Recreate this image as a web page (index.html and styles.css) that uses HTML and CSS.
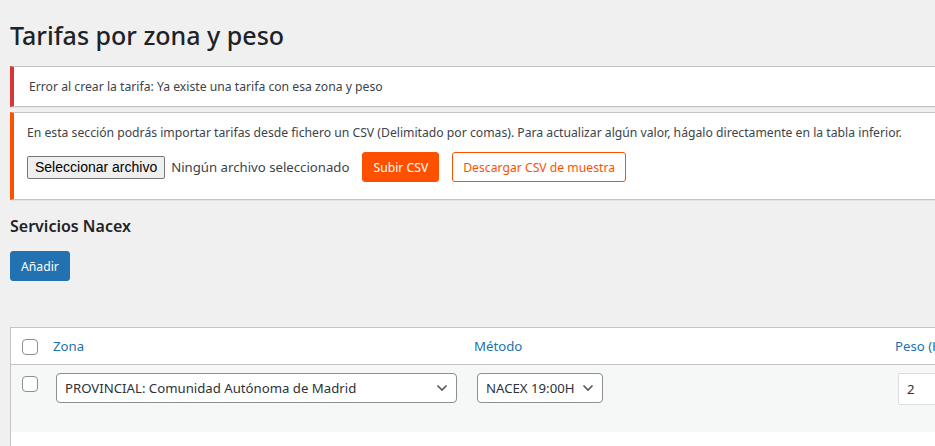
FILE: index.html
```html
<!DOCTYPE html>
<html lang="es">
<head>
<meta charset="UTF-8">
<title>Tarifas por zona y peso</title>
<link rel="stylesheet" href="styles.css">
</head>
<body>

<div class="wrap">
  <h1 class="page-title">Tarifas por zona y peso</h1>

  <!-- avisos -->
  <div class="notice notice-error">
    <p>Error al crear la tarifa: Ya existe una tarifa con esa zona y peso</p>
  </div>

  <div class="notice notice-csv">
    <p>En esta sección podrás importar tarifas desde fichero un CSV (Delimitado por comas). Para actualizar algún valor, hágalo directamente en la tabla inferior.</p>
    <div class="csv-row">
      <div class="file-input">
        <button class="file-btn" type="button">Seleccionar archivo</button>
        <span class="file-name">Ningún archivo seleccionado</span>
      </div>
      <button class="btn btn-orange" type="button">Subir CSV</button>
      <button class="btn btn-orange-outline" type="button">Descargar CSV de muestra</button>
    </div>
  </div>

  <h2 class="section-title">Servicios Nacex</h2>
  <button class="btn btn-primary" type="button">Añadir</button>

  <!-- tabla de tarifas -->
  <div class="rates-table">
    <div class="rates-head">
      <div class="cell check"><span class="checkbox"></span></div>
      <div class="cell col-zone"><a href="#">Zona</a></div>
      <div class="cell col-method"><a href="#">Método</a></div>
      <div class="cell col-weight"><a href="#">Peso (Kg)</a></div>
    </div>
    <div class="rates-row alt">
      <div class="cell check"><span class="checkbox"></span></div>
      <div class="cell col-zone">
        <div class="select select-zone">
          <span>PROVINCIAL: Comunidad Autónoma de Madrid</span>
          <svg width="12" height="8" viewBox="0 0 12 8"><path d="M1.5 1.5 6 6 10.5 1.5" fill="none" stroke="#50575e" stroke-width="1.6"/></svg>
        </div>
      </div>
      <div class="cell col-method">
        <div class="select select-method">
          <span>NACEX 19:00H</span>
          <svg width="12" height="8" viewBox="0 0 12 8"><path d="M1.5 1.5 6 6 10.5 1.5" fill="none" stroke="#50575e" stroke-width="1.6"/></svg>
        </div>
      </div>
      <div class="cell col-weight">
        <div class="text-input">2</div>
      </div>
    </div>
    <div class="rates-row">
      <div class="cell check"></div>
      <div class="cell col-zone"><span class="row-note">Guardar los cambios de la tarifa</span></div>
    </div>
  </div>
</div>

</body>
</html>
```

FILE: styles.css
```css
* {
  box-sizing: border-box;
}

html, body {
  margin: 0;
  background: #f0f0f1;
  overflow: hidden;
}

body {
  font-family: "Noto Sans", "Open Sans", sans-serif;
  font-size: 12.2px;
  color: #3c434a;
  width: 935px;
  height: 446px;
}

.wrap {
  padding-left: 10px;
  width: 1400px;
}

.page-title {
  font-size: 25px;
  font-weight: 500;
  color: #1d2327;
  line-height: 30px;
  margin: 0;
  padding: 20px 0 16px;
}

/* avisos */
.notice {
  background: #fff;
  border: 1px solid #c3c4c7;
  border-left-width: 4px;
  box-shadow: 0 1px 1px rgba(0, 0, 0, .04);
  padding: 1px 12px 1px 15px;
  margin: 0 0 5px;
}

.notice p {
  margin: 8px 0;
  line-height: 21px;
}

.notice-error {
  border-left-color: #d63638;
}

.notice-csv {
  border-left-color: #ff5000;
  padding-left: 13px;
  padding-bottom: 17px;
}

.notice-csv p {
  margin: 8px 0 9px;
}

.csv-row {
  display: flex;
  align-items: center;
  gap: 13px;
}

.file-input {
  display: flex;
  align-items: center;
  gap: 6px;
}

.file-btn {
  font-family: "Liberation Sans", Arial, sans-serif;
  font-size: 14px;
  color: #000;
  background: #efefef;
  border: 1px solid #767676;
  border-radius: 2px;
  height: 23px;
  padding: 0 7px;
}

.file-name {
  color: #3c434a;
  font-size: 13.2px;
}

.btn {
  font-family: inherit;
  font-size: 12.2px;
  height: 30px;
  padding: 0 10px;
  border-radius: 3px;
  cursor: pointer;
}

.btn-orange {
  background: #ff5000;
  border: 1px solid #ff5000;
  color: #fff;
}

.btn-orange-outline {
  background: #fff;
  border: 1px solid #ff5000;
  color: #ff5000;
}

.btn-primary {
  background: #2271b1;
  border: 1px solid #2271b1;
  color: #fff;
  display: block;
}

.section-title {
  font-size: 16px;
  font-weight: 600;
  color: #1d2327;
  margin: 0;
  padding: 10px 0 14px;
}

/* tabla */
.rates-table {
  margin-top: 46px;
  background: #fff;
  border: 1px solid #c3c4c7;
}

.rates-head,
.rates-row {
  display: flex;
}

.rates-head {
  height: 37px;
  border-bottom: 1px solid #c3c4c7;
  align-items: center;
}

.rates-head a {
  color: #2271b1;
  text-decoration: none;
  font-size: 13.2px;
}

.rates-row {
  height: 67px;
}

.rates-row.alt {
  background: #f6f7f7;
}

.cell {
  flex: none;
}

.check {
  width: 42px;
  padding-left: 11px;
}

.rates-head .check {
  padding-top: 1px;
}

.rates-row .check {
  padding-top: 11px;
}

.col-zone,
.col-method {
  width: 421px;
}

.rates-row .col-zone,
.rates-row .col-method,
.rates-row .col-weight {
  padding-top: 8px;
  padding-left: 3px;
}

.checkbox {
  display: block;
  width: 16px;
  height: 16px;
  border: 1px solid #8c8f94;
  border-radius: 4px;
  background: #fff;
}

.select {
  display: flex;
  align-items: center;
  justify-content: space-between;
  height: 30px;
  border: 1px solid #8c8f94;
  border-radius: 4px;
  background: #fff;
  color: #2c3338;
  font-size: 13.2px;
  white-space: nowrap;
  padding: 0 8px;
}

.select-zone {
  width: 401px;
}

.select-method {
  width: 126px;
  gap: 6px;
}

.text-input {
  width: 120px;
  height: 32px;
  border: 1px solid #dcdcde;
  border-radius: 2px;
  background: #fff;
  color: #2c3338;
  font-size: 13.2px;
  line-height: 30px;
  padding-left: 8px;
}

.row-note {
  display: block;
  padding: 8px 0 0 14px;
  color: #3c434a;
}
```
